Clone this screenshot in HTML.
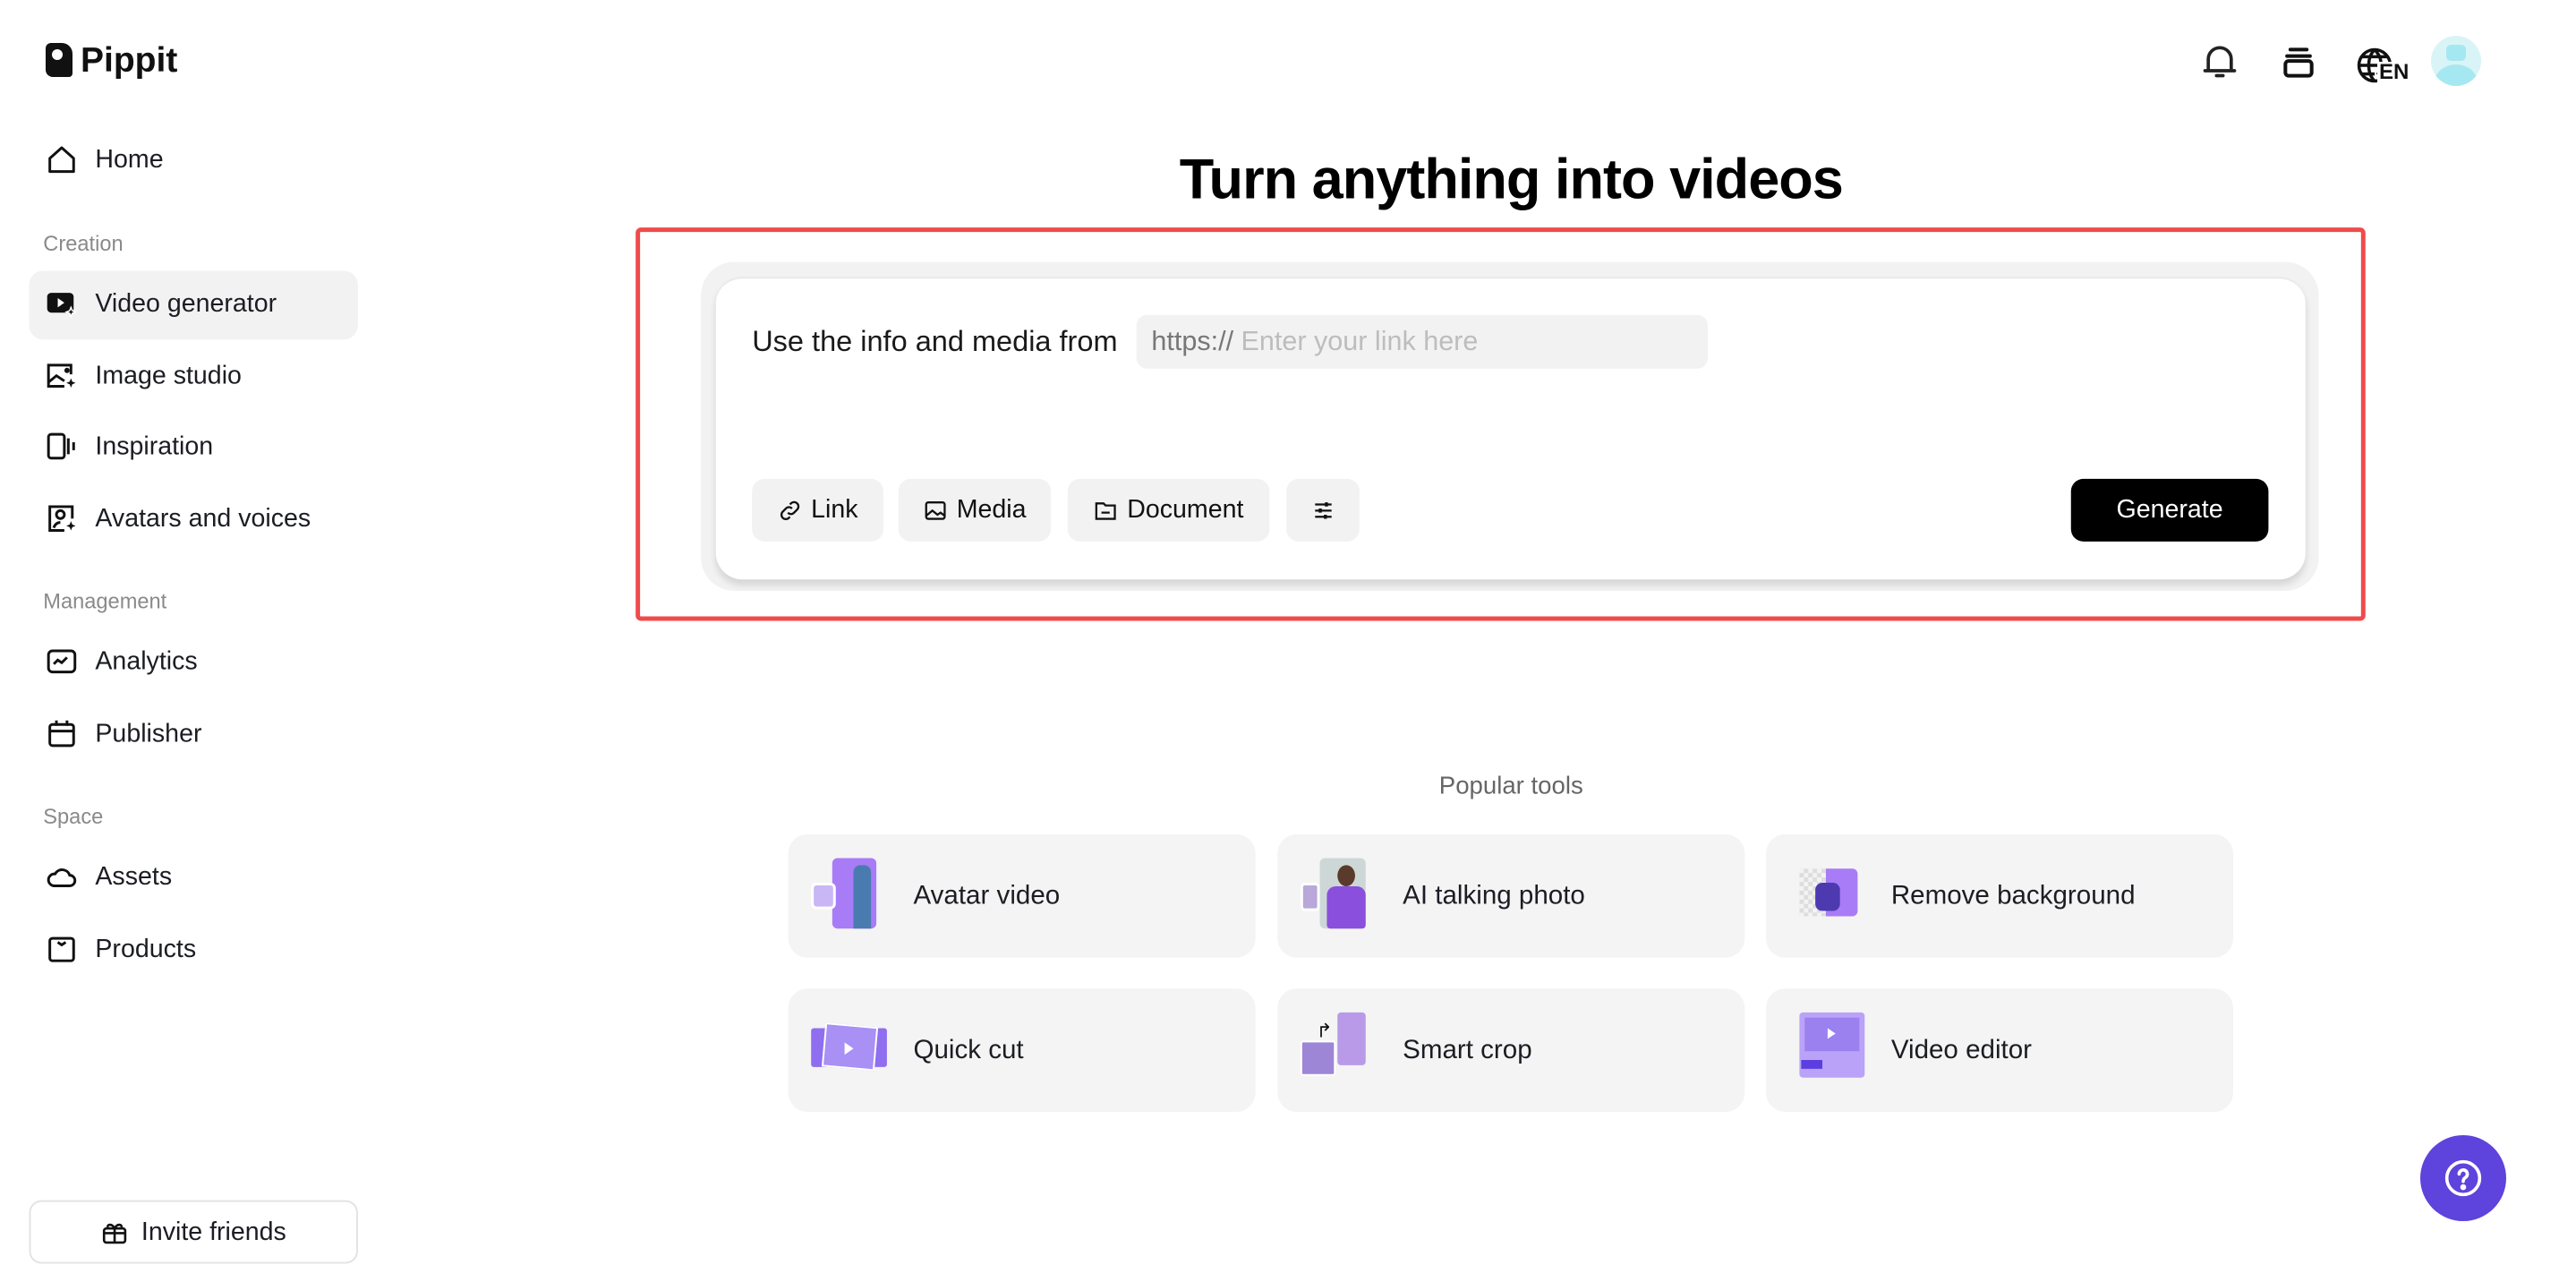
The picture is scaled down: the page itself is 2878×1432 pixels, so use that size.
<!DOCTYPE html>
<html><head><meta charset="utf-8"><style>
*{box-sizing:border-box;margin:0;padding:0}
body{width:2878px;height:1432px;background:#fff;font-family:"Liberation Sans",sans-serif;color:#1c1d23;position:relative;overflow:hidden}
.a{position:absolute}
#w{position:absolute;left:0;top:3px;width:2878px;height:1432px;transform:scale(0.985);transform-origin:0 0}
.nav{position:absolute;left:52px;display:flex;align-items:center;font-size:29px;font-weight:500;color:#1c1d23}
.nav svg{width:36px;height:36px;margin-right:20px}
.sec{position:absolute;left:49px;font-size:24px;color:#8a8a8a}
.btn{position:absolute;top:540px;height:71px;background:#f2f2f2;border-radius:14px;display:flex;align-items:center;justify-content:center;font-size:29px;font-weight:500;color:#111}
.btn svg{width:28px;height:28px;margin-right:10px}
.card{position:absolute;width:530px;height:140px;background:#f4f4f4;border-radius:22px;display:flex;align-items:center;font-size:30px;font-weight:500;color:#1c1d23}
.ic{width:86px;height:86px;margin:0 30px 0 26px;position:relative}
</style></head><body>

<div id="w">
<div class="nav" style="top:160px"><svg viewBox="0 0 24 24" fill="none" stroke="#111" stroke-width="2"><path d="M3 11L12 3l9 8v10H3z" stroke-linejoin="round"/></svg>Home</div>
<div class="sec" style="top:260px">Creation</div>
<div class="a" style="left:33px;top:304px;width:373px;height:78px;background:#f2f2f2;border-radius:16px"></div>
<div class="nav" style="top:323px"><svg viewBox="0 0 24 24"><rect x="1" y="4" width="20" height="15" rx="3" fill="#111"/><path d="M9 8v7l5-3.5z" fill="#fff"/><path d="M19 15l1 2.5 2.5 1-2.5 1-1 2.5-1-2.5-2.5-1 2.5-1z" fill="#111" stroke="#fff"/></svg>Video generator</div>
<div class="nav" style="top:405px"><svg viewBox="0 0 24 24" fill="none" stroke="#111" stroke-width="2"><path d="M19 11V4H2v16h12"/><path d="M2 17l6-5 6 4"/><circle cx="16" cy="8" r="1" fill="#111"/><path d="M19 14l1 2.5 2.5 1-2.5 1-1 2.5-1-2.5-2.5-1 2.5-1z" fill="#111" stroke="none"/></svg>Image studio</div>
<div class="nav" style="top:485px"><svg viewBox="0 0 24 24" fill="none" stroke="#111" stroke-width="2"><rect x="2" y="3" width="12" height="18" rx="2"/><path d="M17 6v12M21 9v6"/></svg>Inspiration</div>
<div class="nav" style="top:567px"><svg viewBox="0 0 24 24" fill="none" stroke="#111" stroke-width="2"><path d="M14 21H3V3h17v9"/><circle cx="11" cy="9" r="3"/><path d="M6 19c1-3 3-4 5-4"/><path d="M19 14l1 2.5 2.5 1-2.5 1-1 2.5-1-2.5-2.5-1 2.5-1z" fill="#111" stroke="none"/></svg>Avatars and voices</div>
<div class="sec" style="top:666px">Management</div>
<div class="nav" style="top:729px"><svg viewBox="0 0 24 24" fill="none" stroke="#111" stroke-width="2"><rect x="2" y="4" width="20" height="16" rx="3"/><path d="M6 14l3-3 3 2 4-4"/></svg>Analytics</div>
<div class="nav" style="top:811px"><svg viewBox="0 0 24 24" fill="none" stroke="#111" stroke-width="2"><rect x="3" y="5" width="18" height="16" rx="2"/><path d="M3 10h18M8 2v4M16 2v4"/></svg>Publisher</div>
<div class="sec" style="top:910px">Space</div>
<div class="nav" style="top:973px"><svg viewBox="0 0 24 24" fill="none" stroke="#111" stroke-width="2"><path d="M6 19h12a4 4 0 000-8 6 6 0 00-11-1 4.5 4.5 0 00-1 9z"/></svg>Assets</div>
<div class="nav" style="top:1055px"><svg viewBox="0 0 24 24" fill="none" stroke="#111" stroke-width="2"><rect x="3" y="4" width="18" height="17" rx="2"/><path d="M9 7l3 2 3-2"/></svg>Products</div>

<div class="a" style="left:33px;top:1358px;width:373px;height:72px;border:2px solid #e3e3e3;border-radius:14px;display:flex;align-items:center;justify-content:center;font-size:29px;font-weight:500"><svg viewBox="0 0 24 24" width="32" height="32" fill="none" stroke="#111" stroke-width="2" style="margin-right:14px"><rect x="3" y="9" width="18" height="12" rx="2"/><path d="M3 13h18M12 9v12M12 9c-2-4-6-4-6-1M12 9c2-4 6-4 6-1"/></svg>Invite friends</div>

<div class="a" style="left:0;width:3428px;top:163px;text-align:center;font-size:64px;font-weight:700;color:#000;letter-spacing:-1px">Turn anything into videos</div>

<div class="a" style="left:721px;top:255px;width:1962px;height:446px;border:5px solid #f04b4b;border-radius:6px"></div>
<div class="a" style="left:795px;top:294px;width:1835px;height:373px;background:#f2f2f2;border-radius:38px"></div>
<div class="a" style="left:812px;top:311px;width:1803px;height:343px;background:#fff;border-radius:30px;box-shadow:0 6px 8px rgba(0,0,0,.12);border-top:2px solid #e8e8e8"></div>
<div class="a" style="left:853px;top:365px;font-size:33px;color:#1a1a1a">Use the info and media from</div>
<div class="a" style="left:1289px;top:354px;width:648px;height:61px;background:#f2f2f2;border-radius:12px;font-size:31px;padding:12px 0 0 17px;color:#777">https:// <span style="color:#bdbdbd">Enter your link here</span></div>

<div class="btn" style="left:853px;width:149px"><svg viewBox="0 0 24 24" fill="none" stroke="#111" stroke-width="2"><path d="M10 14a4 4 0 006 0l3-3a4 4 0 00-6-6l-1 1M14 10a4 4 0 00-6 0l-3 3a4 4 0 006 6l1-1"/></svg>Link</div>
<div class="btn" style="left:1019px;width:173px"><svg viewBox="0 0 24 24" fill="none" stroke="#111" stroke-width="2"><rect x="3" y="4" width="18" height="16" rx="2"/><path d="M3 17l6-5 5 4 3-2 4 3"/></svg>Media</div>
<div class="btn" style="left:1211px;width:229px"><svg viewBox="0 0 24 24" fill="none" stroke="#111" stroke-width="2"><path d="M3 5h7l2 2h9v13H3z"/><path d="M8 14h8"/></svg>Document</div>
<div class="btn" style="left:1459px;width:83px"><svg viewBox="0 0 24 24" fill="none" stroke="#111" stroke-width="2" style="margin:0"><path d="M4 6h16M4 12h16M4 18h16"/><path d="M15 4v4M9 10v4M14 16v4" stroke-width="3"/></svg></div>
<div class="btn" style="left:2349px;width:224px;background:#000;color:#fff">Generate</div>

<div class="a" style="left:0;width:3428px;top:872px;text-align:center;font-size:28px;color:#666">Popular tools</div>

<div class="card" style="left:894px;top:943px"><div class="ic"><div class="a" style="left:24px;top:0;width:50px;height:80px;background:#a87cf6;border-radius:6px"></div><div class="a" style="left:48px;top:8px;width:20px;height:72px;background:#4a7bb0;border-radius:8px 8px 0 0"></div><div class="a" style="left:0;top:28px;width:28px;height:30px;background:#c9b6f5;border:3px solid #fff;border-radius:6px"></div></div>Avatar video</div>
<div class="card" style="left:1449px;top:943px"><div class="ic"><div class="a" style="left:22px;top:0;width:52px;height:80px;background:#cdd8d6;border-radius:6px"></div><div class="a" style="left:30px;top:32px;width:44px;height:48px;background:#8a4fdc;border-radius:10px 10px 4px 4px"></div><div class="a" style="left:42px;top:8px;width:20px;height:24px;background:#5a3a2a;border-radius:50%"></div><div class="a" style="left:0;top:28px;width:22px;height:32px;background:#b9a8d8;border:3px solid #fff;border-radius:5px"></div></div>AI talking photo</div>
<div class="card" style="left:2003px;top:943px"><div class="ic"><div class="a" style="left:12px;top:12px;width:36px;height:54px;background:repeating-conic-gradient(#ddd 0 25%,#f3f3f3 0 50%) 0 0/10px 10px"></div><div class="a" style="left:42px;top:12px;width:36px;height:54px;background:#a87cf6;border-radius:0 6px 6px 0"></div><div class="a" style="left:30px;top:28px;width:28px;height:32px;background:#4d3ab0;border-radius:8px"></div></div>Remove background</div>
<div class="card" style="left:894px;top:1118px"><div class="ic"><div class="a" style="left:0;top:18px;width:86px;height:44px;background:#8f6ef0;border-radius:3px"></div><div class="a" style="left:14px;top:14px;width:60px;height:50px;background:#a990f5;border:2px solid #fff;transform:rotate(5deg)"></div><div class="a" style="left:38px;top:34px;border-left:10px solid #fff;border-top:7px solid transparent;border-bottom:7px solid transparent"></div></div>Quick cut</div>
<div class="card" style="left:1449px;top:1118px"><div class="ic"><div class="a" style="left:42px;top:0;width:32px;height:60px;background:#b89ae8;border-radius:4px"></div><div class="a" style="left:0;top:32px;width:40px;height:40px;background:#9e86d6;border:2px solid #fff;border-radius:3px"></div><div class="a" style="left:18px;top:8px;font-size:22px;color:#111">↱</div></div>Smart crop</div>
<div class="card" style="left:2003px;top:1118px"><div class="ic"><div class="a" style="left:12px;top:0;width:74px;height:74px;background:#b9a2f7;border-radius:4px"></div><div class="a" style="left:18px;top:6px;width:62px;height:38px;background:#9b80ef"></div><div class="a" style="left:44px;top:18px;border-left:9px solid #fff;border-top:6px solid transparent;border-bottom:6px solid transparent"></div><div class="a" style="left:14px;top:54px;width:24px;height:10px;background:#5b3ee0"></div></div>Video editor</div>
</div>

<div class="a" style="left:51px;top:48px;width:30px;height:38px;background:#111;border-radius:6px 12px 4px 8px"></div>
<div class="a" style="left:58px;top:55px;width:12px;height:12px;background:#fff;border-radius:50%"></div>
<div class="a" style="left:90px;top:46px;font-size:39px;font-weight:700;color:#111">Pippit</div>

<svg class="a" style="left:2458px;top:46px" width="44" height="44" viewBox="0 0 24 24" fill="none" stroke="#222" stroke-width="2"><path d="M5 18V11a7 7 0 0114 0v7M3 18h18M10 21h4" stroke-linecap="round"/></svg>
<svg class="a" style="left:2546px;top:48px" width="44" height="44" viewBox="0 0 24 24" fill="none" stroke="#111" stroke-width="2.2"><path d="M7 4h10M5 8h14" stroke-linecap="round"/><rect x="4" y="11" width="16" height="9" rx="2"/></svg>
<svg class="a" style="left:2632px;top:52px" width="42" height="42" viewBox="0 0 24 24" fill="none" stroke="#111" stroke-width="2"><circle cx="12" cy="12" r="10"/><path d="M2 12h20M12 2c-5 5-5 15 0 20M12 2c5 5 5 10 2 16M4 6.5h16M4 17.5h8"/></svg>
<div class="a" style="left:2656px;top:69px;font-size:24px;font-weight:700;color:#111;background:#fff;padding-left:2px;line-height:24px">EN</div>
<div class="a" style="left:2716px;top:40px;width:56px;height:56px;border-radius:50%;background:#d9f4f7;overflow:hidden"><div class="a" style="left:17px;top:10px;width:22px;height:18px;background:#a6e8f2;border-radius:5px"></div><div class="a" style="left:4px;top:32px;width:48px;height:40px;background:#a6e8f2;border-radius:50%"></div></div>

<div class="a" style="left:2704px;top:1268px;width:96px;height:96px;border-radius:50%;background:#5e43dc"><svg viewBox="0 0 24 24" width="44" height="44" style="margin:26px" fill="none" stroke="#fff" stroke-width="2"><circle cx="12" cy="12" r="10"/><path d="M9.5 9.5a2.5 2.5 0 114 2c-1 .7-1.5 1.2-1.5 2.5" stroke-linecap="round"/><circle cx="12" cy="17.5" r=".8" fill="#fff"/></svg></div>
</body></html>
